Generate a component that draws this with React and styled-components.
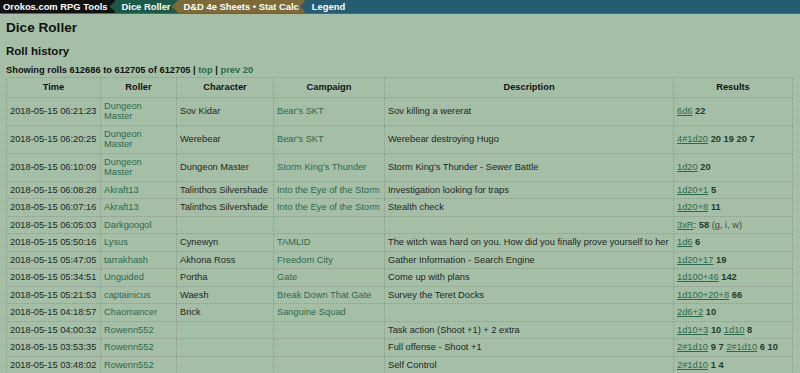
import React from 'react'
import styled, { createGlobalStyle } from 'styled-components'

const GlobalStyle = createGlobalStyle`
  html {
    overflow-y: scroll;
  }
  html, body {
    margin: 0;
    padding: 0;
    background: #a5bfa7;
    font-family: "Liberation Sans", Arial, sans-serif;
    color: #1f261f;
  }
  ::-webkit-scrollbar {
    width: 10px;
  }
  ::-webkit-scrollbar-track {
    background: #f1f1f1;
  }
  ::-webkit-scrollbar-thumb {
    background: #c4c4c4;
  }
`

const rows = [
  { time: '2018-05-15 06:21:23', roller: 'Dungeon Master', character: 'Sov Kidar', campaign: "Bear's SKT", desc: 'Sov killing a wererat', results: [['6d6', '22']] },
  { time: '2018-05-15 06:20:25', roller: 'Dungeon Master', character: 'Werebear', campaign: "Bear's SKT", desc: 'Werebear destroying Hugo', results: [['4#1d20', '20 19 20 7']] },
  { time: '2018-05-15 06:10:09', roller: 'Dungeon Master', character: 'Dungeon Master', campaign: "Storm King's Thunder", desc: "Storm King's Thunder - Sewer Battle", results: [['1d20', '20']] },
  { time: '2018-05-15 06:08:28', roller: 'Akraft13', character: 'Talinthos Silvershade', campaign: 'Into the Eye of the Storm', desc: 'Investigation looking for traps', results: [['1d20+1', '5']] },
  { time: '2018-05-15 06:07:16', roller: 'Akraft13', character: 'Talinthos Silvershade', campaign: 'Into the Eye of the Storm', desc: 'Stealth check', results: [['1d20+8', '11']] },
  { time: '2018-05-15 06:05:03', roller: 'Darkgoogol', character: '', campaign: '', desc: '', special: true },
  { time: '2018-05-15 05:50:16', roller: 'Lysus', character: 'Cynewyn', campaign: 'TAMLID', desc: 'The witch was hard on you. How did you finally prove yourself to her', results: [['1d6', '6']] },
  { time: '2018-05-15 05:47:05', roller: 'tarrakhash', character: 'Akhona Ross', campaign: 'Freedom City', desc: 'Gather Information - Search Engine', results: [['1d20+17', '19']] },
  { time: '2018-05-15 05:34:51', roller: 'Unguided', character: 'Portha', campaign: 'Gate', desc: 'Come up with plans', results: [['1d100+46', '142']] },
  { time: '2018-05-15 05:21:53', roller: 'captainicus', character: 'Waesh', campaign: 'Break Down That Gate', desc: 'Survey the Teret Docks', results: [['1d100+20+8', '66']] },
  { time: '2018-05-15 04:18:57', roller: 'Chaomancer', character: 'Brick', campaign: 'Sanguine Squad', desc: '', results: [['2d6+2', '10']] },
  { time: '2018-05-15 04:00:32', roller: 'Rowenn552', character: '', campaign: '', desc: 'Task action (Shoot +1) + 2 extra', results: [['1d10+3', '10'], ['1d10', '8']] },
  { time: '2018-05-15 03:53:35', roller: 'Rowenn552', character: '', campaign: '', desc: 'Full offense - Shoot +1', results: [['2#1d10', '9 7'], ['2#1d10', '6 10']] },
  { time: '2018-05-15 03:48:02', roller: 'Rowenn552', character: '', campaign: '', desc: 'Self Control', results: [['2#1d10', '1 4']] },
  { time: '2018-05-15 03:40:11', roller: 'Rowenn552', character: '', campaign: '', desc: 'Perception', results: [['1d10+2', '7']] },
]

const navItems = [
  { label: 'Dice Roller', bg: '#1b5a47' },
  { label: 'D&D 4e Sheets \u2022 Stat Calc', bg: '#7c6b39' },
  { label: 'Legend', bg: '#255c6f', grow: true },
]

export default function App() {
  return (
    <>
      <GlobalStyle />
      <NavBar>
        <Brand>Orokos.com RPG Tools</Brand>
        {navItems.map((item) => (
          <NavItem key={item.label} $bg={item.bg} $grow={item.grow}>
            {item.label}
          </NavItem>
        ))}
      </NavBar>
      <Main>
        <Title>Dice Roller</Title>
        <SubTitle>Roll history</SubTitle>
        <Summary>
          Showing rolls 612686 to 612705 of 612705 | <PlainLink href="#">top</PlainLink> |{' '}
          <PlainLink href="#">prev 20</PlainLink>
        </Summary>
        <History>
          <colgroup>
            <col style={{ width: 94 }} />
            <col style={{ width: 76 }} />
            <col style={{ width: 97 }} />
            <col style={{ width: 111 }} />
            <col style={{ width: 289 }} />
            <col />
          </colgroup>
          <thead>
            <tr>
              {['Time', 'Roller', 'Character', 'Campaign', 'Description', 'Results'].map((h) => (
                <Head key={h}>{h}</Head>
              ))}
            </tr>
          </thead>
          <tbody>
            {rows.map((row) => (
              <tr key={row.time}>
                <Cell>{row.time}</Cell>
                <Cell $wrap>
                  <PlainLink href="#">{row.roller}</PlainLink>
                </Cell>
                <Cell>{row.character}</Cell>
                <Cell>
                  <PlainLink href="#">{row.campaign}</PlainLink>
                </Cell>
                <Cell>{row.desc}</Cell>
                <Cell>
                  {row.special ? (
                    <>
                      <DiceLink href="#">3xR</DiceLink>: <Total>58</Total> <Note>(g, i, w)</Note>
                    </>
                  ) : (
                    row.results.map(([dice, total], i) => (
                      <React.Fragment key={i}>
                        {i > 0 && ' '}
                        <DiceLink href="#">{dice}</DiceLink> <Total>{total}</Total>
                      </React.Fragment>
                    ))
                  )}
                </Cell>
              </tr>
            ))}
          </tbody>
        </History>
      </Main>
    </>
  )
}

const NavBar = styled.div`
  display: flex;
  height: 13px;
  background: #255c6f;
  border-bottom: 1px solid #3f6f70;
`

const Brand = styled.div`
  background: #111;
  color: #fff;
  font-size: 9.4px;
  font-weight: bold;
  line-height: 13px;
  padding: 0 7px 0 3px;
`

const NavItem = styled.div`
  background: ${(p) => p.$bg};
  color: #fff;
  font-size: 9.4px;
  font-weight: bold;
  line-height: 13px;
  margin-left: -5px;
  padding: 0 6px 0 12px;
  flex: ${(p) => (p.$grow ? 1 : 'none')};
  clip-path: polygon(7px 0, 100% 0, 100% 100%, 7px 100%, 0 50%);
`

const Main = styled.div`
  padding: 0 7px 0 6px;
`

const Title = styled.h1`
  margin: 6px 0 0;
  font-size: 13.6px;
  line-height: 16px;
  font-weight: bold;
  color: #111;
`

const SubTitle = styled.h2`
  margin: 8px 0 0;
  font-size: 11.5px;
  line-height: 14px;
  font-weight: bold;
  color: #111;
`

const Summary = styled.p`
  margin: 6px 0 1px;
  font-size: 9.3px;
  line-height: 12px;
  font-weight: bold;
  color: #111;
`

const PlainLink = styled.a`
  color: #2b6a4b;
  text-decoration: none;
`

const History = styled.table`
  width: 100%;
  table-layout: fixed;
  border-collapse: collapse;
  border: 1px dotted #8c9d8e;
  font-size: 9.3px;
`

const Head = styled.th`
  border: 1px dotted #8c9d8e;
  padding: 4px 3px;
  line-height: 10.5px;
  font-weight: bold;
  text-align: center;
  color: #111;
`

const Cell = styled.td`
  border: 1px dotted #8c9d8e;
  padding: ${(p) => (p.$wrap ? '3px 12px 3px 3px' : '3px')};
  line-height: 10.5px;
  vertical-align: middle;
  white-space: ${(p) => (p.$wrap ? 'normal' : 'nowrap')};
  overflow: hidden;
  color: #1f261f;
`

const DiceLink = styled.a`
  color: #2b6a4b;
  text-decoration: underline;
`

const Total = styled.b`
  color: #1c3d2b;
`

const Note = styled.span`
  color: #3c4a3e;
`
